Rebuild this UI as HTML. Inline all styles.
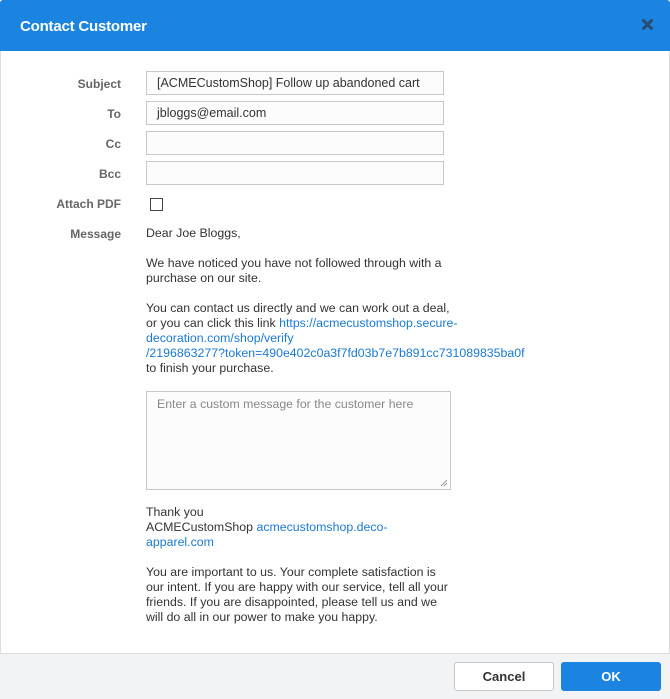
<!DOCTYPE html>
<html><head><style>
*{box-sizing:border-box;margin:0;padding:0}
body{width:670px;height:699px;background:#fff;font-family:"Liberation Sans",sans-serif;font-size:12px;color:#333;position:relative;overflow:hidden}
.hdr{position:absolute;left:0;top:0;width:670px;height:51px;background:#1a84e0;border-radius:3px 3px 0 0}
.hdr h1{position:absolute;left:20px;top:18px;color:#fff;font-size:15px;font-weight:bold;letter-spacing:-0.2px}
.x{position:absolute;left:642px;top:19px;width:11px;height:11px}
.bodyp{position:absolute;left:0;top:51px;width:670px;height:603px;border:1px solid #dcdcdc;border-top:none}
.lbl{position:absolute;width:121px;text-align:right;color:#666;font-weight:bold;font-size:12px}
.inp{position:absolute;left:146px;width:298px;height:24px;border:1px solid #c8c8c8;background:#fcfcfc;padding:4px 10px;font-size:12.5px;color:#333}
.cb{position:absolute;left:150px;top:198px;width:13px;height:13px;border:1px solid #444;background:#fff}
.txt{position:absolute;left:146px;line-height:15px;font-size:12.35px;color:#333;white-space:nowrap}
a{color:#1a7ad4;text-decoration:none}
.ta{position:absolute;left:146px;top:391px;width:305px;height:99px;border:1px solid #c8c8c8;background:#fcfcfc;padding:5px 10px;color:#888;font-size:12.3px}
.foot{position:absolute;left:0;top:654px;width:670px;height:45px;background:#f2f3f5}
.btn{position:absolute;top:662px;height:29px;border-radius:3px;font-size:13px;font-weight:bold;text-align:center;line-height:29px}
</style></head><body>
<div class="hdr"><h1>Contact Customer</h1>
<svg class="x" viewBox="0 0 11 11"><path d="M1.5 1.5L9.5 9.5M9.5 1.5L1.5 9.5" stroke="#2b4a6e" stroke-width="3" stroke-linecap="round"/></svg></div>
<div class="bodyp"></div>
<div class="lbl" style="top:77px">Subject</div>
<div class="inp" style="top:71px">[ACMECustomShop] Follow up abandoned cart</div>
<div class="lbl" style="top:107px">To</div>
<div class="inp" style="top:101px">jbloggs@email.com</div>
<div class="lbl" style="top:137px">Cc</div>
<div class="inp" style="top:131px"></div>
<div class="lbl" style="top:167px">Bcc</div>
<div class="inp" style="top:161px"></div>
<div class="lbl" style="top:197px">Attach PDF</div>
<div class="cb"></div>
<div class="lbl" style="top:227px">Message</div>
<div class="txt" style="top:226px">Dear Joe Bloggs,</div>
<div class="txt" style="top:256px">We have noticed you have not followed through with a<br>purchase on our site.</div>
<div class="txt" style="top:301px">You can contact us directly and we can work out a deal,<br>or you can click this link <a>https://acmecustomshop.secure-<br>decoration.com/shop/verify<br>/2196863277?token=490e402c0a3f7fd03b7e7b891cc731089835ba0f</a><br>to finish your purchase.</div>
<div class="ta">Enter a custom message for the customer here
<svg style="position:absolute;right:2px;bottom:2px" width="8" height="8" viewBox="0 0 8 8"><path d="M7 1L1 7M7 4L4 7" stroke="#999" stroke-width="1"/></svg></div>
<div class="txt" style="top:505px">Thank you<br>ACMECustomShop <a>acmecustomshop.deco-<br>apparel.com</a></div>
<div class="txt" style="top:565px">You are important to us. Your complete satisfaction is<br>our intent. If you are happy with our service, tell all your<br>friends. If you are disappointed, please tell us and we<br>will do all in our power to make you happy.</div>
<div class="foot"></div>
<div class="btn" style="left:454px;width:100px;background:#fff;border:1px solid #c8c8c8;color:#333;line-height:27px">Cancel</div>
<div class="btn" style="left:561px;width:100px;background:#1a84e0;color:#fff">OK</div>
</body></html>
